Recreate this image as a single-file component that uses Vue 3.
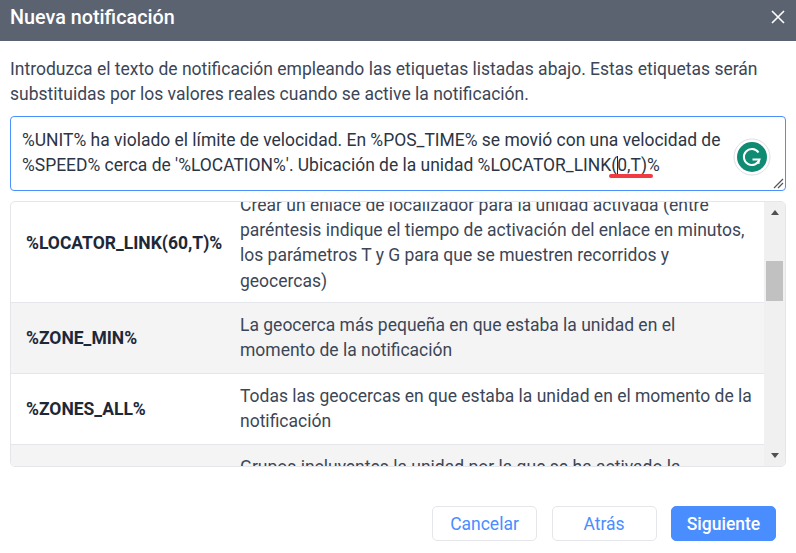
<template>
  <div class="dialog">
    <header class="dialog-header">
      <span class="dialog-title">Nueva notificación</span>
      <button class="close-btn" aria-label="Cerrar">
        <svg width="14" height="14" viewBox="0 0 14 14">
          <path d="M1 1L13 13M13 1L1 13" stroke="#fff" stroke-width="1.6" fill="none" />
        </svg>
      </button>
    </header>

    <div class="dialog-body">
      <p class="intro">
        Introduzca el texto de notificación empleando las etiquetas listadas abajo. Estas etiquetas serán
        substituidas por los valores reales cuando se active la notificación.
      </p>

      <div class="message-box">
        <div class="message-text">
          %UNIT% ha violado el límite de velocidad. En %POS_TIME% se movió con una velocidad de<br />
          %SPEED% cerca de '%LOCATION%'. Ubicación de la unidad %LOCATOR_LINK<span class="spell">(<span class="caret"></span>0,T)</span>%
        </div>
        <svg class="grammarly" width="38" height="38" viewBox="0 0 38 38">
          <circle cx="19" cy="19" r="18" fill="#fff" stroke="#dcdfe6" stroke-width="1" />
          <circle cx="19" cy="19" r="15" fill="#0f8a73" />
          <path d="M25.5 14.5A8 8 0 1 0 26.5 21.5H19.5" stroke="#fff" stroke-width="2" fill="none" />
          <path d="M26.5 21.5v4.5l-4-1z" fill="#fff" />
        </svg>
        <svg class="resize" width="11" height="11" viewBox="0 0 11 11">
          <path d="M1 10L10 1M5 10L10 5" stroke="#555" stroke-width="1.2" fill="none" />
        </svg>
      </div>

      <div class="tag-list">
        <div class="tag-rows">
          <div class="tag-rows-inner">
            <div v-for="tag in tags" :key="tag.name" class="tag-row">
              <div class="tag-name">{{ tag.name }}</div>
              <div class="tag-desc">{{ tag.desc }}</div>
            </div>
          </div>
        </div>
        <div class="scrollbar">
          <span class="arrow arrow-up"></span>
          <span class="thumb"></span>
          <span class="arrow arrow-down"></span>
        </div>
      </div>
    </div>

    <footer class="dialog-footer">
      <button class="btn">Cancelar</button>
      <button class="btn">Atrás</button>
      <button class="btn primary">Siguiente</button>
    </footer>
  </div>
</template>

<script setup>
const tags = [
  {
    name: '%LOCATOR_LINK(60,T)%',
    desc: 'Crear un enlace de localizador para la unidad activada (entre paréntesis indique el tiempo de activación del enlace en minutos, los parámetros T y G para que se muestren recorridos y geocercas)'
  },
  {
    name: '%ZONE_MIN%',
    desc: 'La geocerca más pequeña en que estaba la unidad en el momento de la notificación'
  },
  {
    name: '%ZONES_ALL%',
    desc: 'Todas las geocercas en que estaba la unidad en el momento de la notificación'
  },
  {
    name: '%UNIT_GROUP%',
    desc: 'Grupos incluyentes la unidad por la que se ha activado la notificación'
  }
]
</script>

<style>
html, body {
  margin: 0;
  background: #fff;
}
</style>

<style scoped>
.dialog {
  width: 796px;
  height: 553px;
  display: flex;
  flex-direction: column;
  font-family: Roboto, "Liberation Sans", sans-serif;
  font-size: 17.5px;
  line-height: 25.2px;
  color: #3c4656;
  overflow: hidden;
}

.dialog-header {
  height: 41px;
  flex: none;
  padding: 0 10px;
  background: #5b6270;
  display: flex;
  align-items: center;
  justify-content: space-between;
}

.dialog-title {
  color: #fff;
  font-size: 19.8px;
  font-weight: 500;
  margin-top: -5px;
}

.close-btn {
  padding: 0;
  margin-right: 1px;
  margin-top: -7px;
  border: none;
  background: none;
  display: flex;
}

.dialog-body {
  flex: 1;
  padding: 16px 10px 0;
}

.intro {
  margin: 0 0 9px;
}

.message-box {
  position: relative;
  height: 75px;
  box-sizing: border-box;
  padding: 11px;
  border: 1px solid #4a90ff;
  border-radius: 4px;
  color: #2c3545;
}

.message-text {
  font-size: 17.47px;
  line-height: 25px;
  white-space: nowrap;
}

.spell {
  position: relative;
}

.spell::after {
  content: "";
  position: absolute;
  left: -2px;
  right: -6px;
  bottom: -3px;
  height: 4px;
  border-radius: 2px;
  background: #ef3b41;
}

.caret {
  display: inline-block;
  width: 1px;
  height: 19px;
  margin-right: -1px;
  vertical-align: top;
  margin-top: 3px;
  background: #222;
}

.grammarly {
  position: absolute;
  right: 14px;
  top: 21px;
}

.resize {
  position: absolute;
  right: 1px;
  bottom: 1px;
}

.tag-list {
  margin-top: 10px;
  height: 266px;
  box-sizing: border-box;
  border: 1px solid #e4e6e9;
  border-radius: 5px;
  display: flex;
  overflow: hidden;
}

.tag-rows {
  flex: 1;
  min-width: 0;
  overflow: hidden;
}

.tag-rows-inner {
  margin-top: -20.5px;
}

.tag-row {
  display: flex;
  align-items: center;
  padding: 9.8px 0 9.8px 15px;
  border-bottom: 1px solid #e4e6e9;
}

.tag-row:first-child {
  padding-top: 11px;
  padding-bottom: 8.6px;
}

.tag-row:nth-child(even) {
  background: #f4f4f5;
}

.tag-name {
  width: 214px;
  flex: none;
  font-weight: 700;
  color: #1d2839;
}

.tag-desc {
  flex: 1;
  padding-right: 10px;
}

.scrollbar {
  width: 21px;
  flex: none;
  background: #f0f0f0;
  display: flex;
  flex-direction: column;
  align-items: center;
}

.arrow {
  width: 0;
  height: 0;
  border-left: 4.5px solid transparent;
  border-right: 4.5px solid transparent;
}

.arrow-up {
  margin-top: 8px;
  border-bottom: 5px solid #505050;
}

.arrow-down {
  margin-top: auto;
  margin-bottom: 8px;
  border-top: 5px solid #505050;
}

.thumb {
  width: 17px;
  height: 40px;
  margin-top: 46px;
  background: #c1c1c1;
}

.dialog-footer {
  flex: none;
  padding: 0 20px 12px;
  display: flex;
  justify-content: flex-end;
  gap: 14.5px;
}

.btn {
  width: 105px;
  height: 35px;
  box-sizing: border-box;
  border: 1px solid #e4e6e9;
  border-radius: 5px;
  background: #fff;
  color: #4a8dff;
  font-family: inherit;
  font-size: 17.5px;
  font-weight: 400;
}

.btn.primary {
  border-color: #4a8dff;
  background: #4a8dff;
  color: #fff;
  font-weight: 500;
}
</style>
